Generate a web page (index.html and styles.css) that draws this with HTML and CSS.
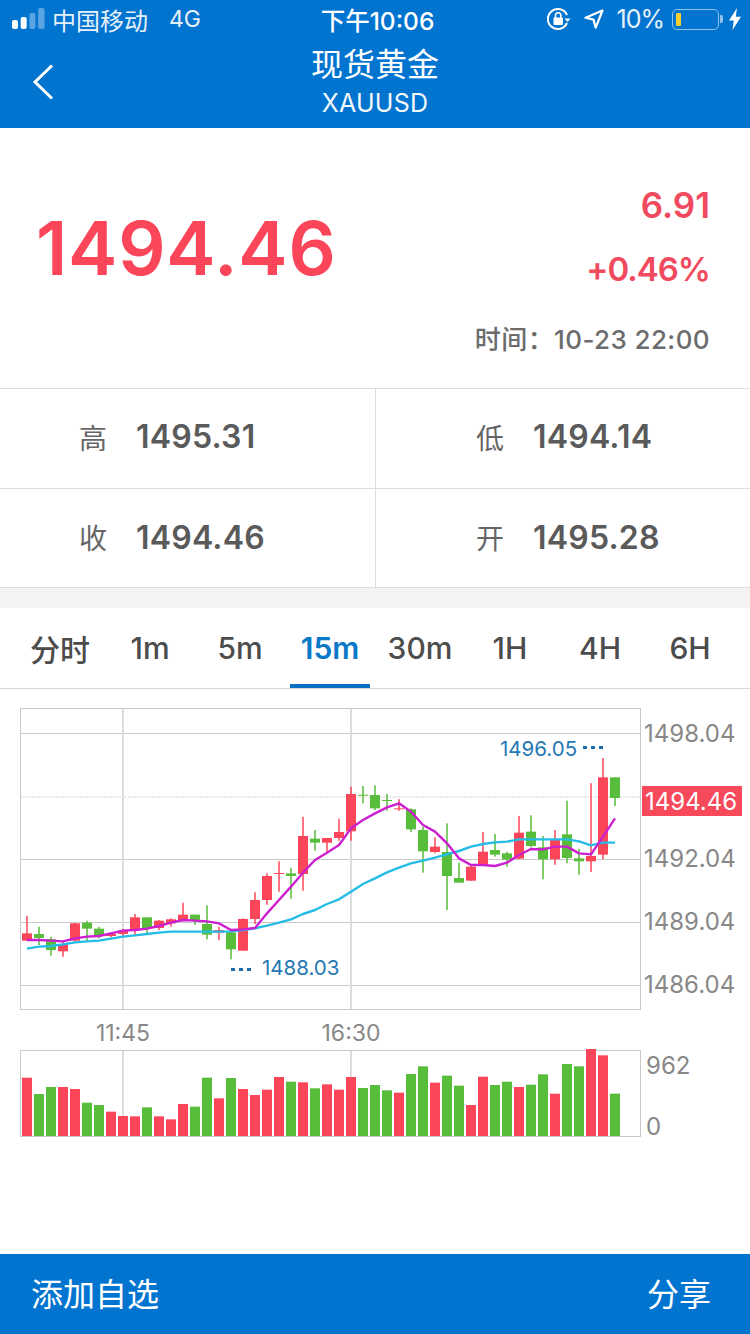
FILE: index.html
```html
<!DOCTYPE html>
<html lang="zh-CN">
<head>
    <meta charset="UTF-8">
    <meta name="viewport" content="width=device-width, initial-scale=1.0">
    <title>现货黄金</title>
    <link rel="stylesheet" href="styles.css">
</head>
<body>
    <div class="page">
        <header class="topbar">
            <div class="status">
                <div class="status-left">
                    <svg class="signal" width="34" height="22" viewBox="0 0 34 22">
                        <rect x="0" y="12" width="6" height="9" rx="2" fill="#fff"/>
                        <rect x="8.700" y="9" width="6" height="12" rx="2" fill="#fff"/>
                        <rect x="17.400" y="5" width="6" height="16" rx="2" fill="#fff" opacity=".35"/>
                        <rect x="26.100" y="0" width="6.500" height="21" rx="2" fill="#fff" opacity=".35"/>
                    </svg>
                    <span class="carrier">中国移动</span>
                    <span class="net">4G</span>
                </div>
                <div class="clock">下午10:06</div>
                <div class="status-right">
                    <svg width="24" height="24" viewBox="0 0 24 24" fill="none">
                        <path d="M20 8A10 10 0 1 0 20 16" stroke="#fff" stroke-width="2"/>
                        <path d="M17.500 11.500h6l-3 3.500z" fill="#fff"/>
                        <rect x="6.500" y="10.500" width="9.500" height="7.500" rx="1" fill="#fff"/>
                        <path d="M8.500 11V8.500a2.700 2.700 0 0 1 5.400 0V11" stroke="#fff" stroke-width="1.600"/>
                    </svg>
                    <svg class="locate" width="20" height="20" viewBox="0 0 20 20" fill="none">
                        <path d="M18.500 1.500L1.500 8.800l8 1.800 2.200 8z" stroke="#fff" stroke-width="2.200" stroke-linejoin="round"/>
                    </svg>
                    <span class="pct">10%</span>
                    <span class="battery"><span class="battery-fill"></span></span>
                    <svg class="bolt" width="12" height="22" viewBox="0 0 12 22">
                        <path d="M8 0L0 12.500h4.800L3.500 22 12 8.800H6.800z" fill="#fff"/>
                    </svg>
                </div>
            </div>
            <div class="title-block">
                <svg class="back" width="24" height="38" viewBox="0 0 24 38" fill="none">
                    <path d="M20 2.500L3 19l17 16.500" stroke="#fff" stroke-width="3"/>
                </svg>
                <h1 class="title">现货黄金</h1>
                <div class="subtitle">XAUUSD</div>
            </div>
        </header>

        <section class="quote">
            <div class="last-price">1494.46</div>
            <div class="quote-side">
                <div class="change change-abs">6.91</div>
                <div class="change change-pct">+0.46%</div>
                <div class="quote-time">时间：10-23 22:00</div>
            </div>
        </section>

        <section class="stats">
            <div class="stat"><span class="stat-label">高</span><span class="stat-value">1495.31</span></div>
            <div class="stat"><span class="stat-label">低</span><span class="stat-value">1494.14</span></div>
            <div class="stat"><span class="stat-label">收</span><span class="stat-value">1494.46</span></div>
            <div class="stat"><span class="stat-label">开</span><span class="stat-value">1495.28</span></div>
        </section>

        <div class="band"></div>

        <nav class="tabs">
            <span class="tab">分时</span>
            <span class="tab">1m</span>
            <span class="tab">5m</span>
            <span class="tab active">15m</span>
            <span class="tab">30m</span>
            <span class="tab">1H</span>
            <span class="tab">4H</span>
            <span class="tab">6H</span>
        </nav>

        <!-- viewBox starts at 689 so that the numbers are page y values -->
        <svg class="chart" width="750" height="455" viewBox="0 689 750 455">
            <g class="grid">
                <line x1="20" x2="640" y1="733.500" y2="733.500"/>
                <line x1="20" x2="640" y1="859.500" y2="859.500"/>
                <line x1="20" x2="640" y1="922.500" y2="922.500"/>
                <line x1="20" x2="640" y1="985.500" y2="985.500"/>
                <line class="grid-dot" x1="20" x2="640" y1="797" y2="797"/>
                <line class="grid-v" x1="123" x2="123" y1="709" y2="1010"/>
                <line class="grid-v" x1="351" x2="351" y1="709" y2="1010"/>
                <line class="grid-v" x1="123" x2="123" y1="1050" y2="1136"/>
                <line class="grid-v" x1="351" x2="351" y1="1050" y2="1136"/>
                <rect x="20.500" y="708.500" width="620" height="301"/>
                <rect x="20.500" y="1050.500" width="620" height="86"/>
            </g>
            <g id="candles"></g>
            <polyline id="ma-slow" class="ma-slow"></polyline>
            <polyline id="ma-fast" class="ma-fast"></polyline>
            <g id="volumes"></g>

            <text class="axis" x="644" y="742">1498.04</text>
            <text class="axis" x="644" y="867">1492.04</text>
            <text class="axis" x="644" y="930">1489.04</text>
            <text class="axis" x="644" y="993">1486.04</text>
            <rect class="now-bg" x="642" y="786" width="100" height="30"/>
            <text class="now" x="645" y="810">1494.46</text>

            <text class="mark" x="500" y="756">1496.05</text>
            <line class="mark-dots" x1="583" x2="604" y1="747.500" y2="747.500"/>
            <text class="mark" x="262" y="975">1488.03</text>
            <line class="mark-dots" x1="231" x2="252" y1="969.500" y2="969.500"/>

            <text class="axis time" x="123" y="1041">11:45</text>
            <text class="axis time" x="351" y="1041">16:30</text>
            <text class="axis" x="646" y="1074">962</text>
            <text class="axis" x="646" y="1135">0</text>
        </svg>

        <footer class="bottombar">
            <span>添加自选</span>
            <span>分享</span>
        </footer>
    </div>
    <script src="chart.js"></script>
</body>
</html>
```
FILE: styles.css
```css
*{
    margin: 0;
    padding: 0;
    box-sizing: border-box;
}
body{
    width: 750px;
    height: 1334px;
    overflow: hidden;
    background: #fff;
    font-family: Inter, "Noto Sans CJK SC", sans-serif;
}
.page{
    height: 1334px;
    display: flex;
    flex-direction: column;
}

/* top */
.topbar{
    height: 128px;
    background: #0174d0;
    color: #fff;
}
.status{
    height: 40px;
    display: grid;
    grid-template-columns: 1fr auto 1fr;
    align-items: center;
    padding: 0 9px 2px 12px;
}
.status-left,
.status-right{
    display: flex;
    align-items: center;
}
.status-right{
    justify-content: flex-end;
}
.signal{
    margin-right: 6px;
}
.carrier{
    font-size: 24px;
    opacity: .9;
}
.net{
    font-size: 23px;
    margin-left: 21px;
    opacity: .9;
}
.clock{
    font-size: 24.500px;
    font-weight: 500;
    margin-left: 2px;
}
.locate{
    margin-left: 13px;
}
.pct{
    font-size: 25px;
    margin-left: 13px;
    letter-spacing: -1px;
    opacity: .9;
}
.battery{
    width: 47px;
    height: 21px;
    margin-left: 8px;
    padding: 3px;
    border: 1.500px solid #8fc3ee;
    border-radius: 5px;
    margin-right: 10px;
    position: relative;
}
.battery::after{
    content: '';
    position: absolute;
    right: -5px;
    top: 5px;
    width: 3px;
    height: 8px;
    border-radius: 0 2px 2px 0;
    background: #8fc3ee;
}
.battery-fill{
    display: block;
    width: 5px;
    height: 100%;
    border-radius: 1px;
    background: #f2cf2c;
}
.title-block{
    height: 88px;
    text-align: center;
    position: relative;
}
.back{
    position: absolute;
    left: 32px;
    top: 23px;
}
.title{
    font-size: 32px;
    font-weight: 400;
    line-height: 44px;
    padding-top: 3px;
}
.subtitle{
    font-size: 25px;
    letter-spacing: .2px;
    line-height: 30px;
    margin-top: 1px;
    opacity: .95;
}

/* quote */
.quote{
    height: 261px;
    padding: 0 40px 0 36px;
    display: flex;
    justify-content: space-between;
    align-items: center;
    border-bottom: 1px solid #ddd;
}
.last-price{
    font-size: 74px;
    font-weight: 600;
    letter-spacing: .8px;
    padding-bottom: 20px;
    color: #fb4558;
}
.quote-side{
    text-align: right;
    padding-top: 14px;
}
.change{
    font-weight: 600;
    line-height: 64px;
    color: #f04a5e;
}
.change-abs{
    font-size: 35px;
}
.change-pct{
    font-size: 33px;
    letter-spacing: -1px;
}
.quote-time{
    font-size: 26px;
    font-weight: 500;
    letter-spacing: .4px;
    line-height: 36px;
    margin-top: 21px;
    color: #6c6c6c;
}

/* high low open close */
.stats{
    display: grid;
    grid-template-columns: 376px 374px;
    border-bottom: 1px solid #ddd;
}
.stat{
    height: 100px;
    padding: 0 0 4px 79px;
    display: flex;
    align-items: center;
    border-bottom: 1px solid #ddd;
    color: #5a5a5a;
}
.stat:nth-child(odd){
    border-right: 1px solid #ddd;
}
.stat:nth-child(even){
    padding-left: 100px;
}
.stat:nth-child(n+3){
    height: 98px;
    padding-bottom: 2px;
    border-bottom: 0;
}
.stat-label{
    font-size: 28px;
    margin-right: 29px;
    color: #666;
}
.stat-value{
    font-size: 32px;
    font-weight: 600;
    letter-spacing: .2px;
}
.band{
    height: 20px;
    background: #f3f3f4;
}

/* period tabs */
.tabs{
    height: 81px;
    padding: 0 15px;
    display: flex;
    align-items: center;
    border-bottom: 1px solid #d8d8dc;
}
.tab{
    width: 90px;
    height: 100%;
    padding-bottom: 1px;
    display: flex;
    align-items: center;
    justify-content: center;
    font-size: 30px;
    font-weight: 500;
    color: #4c4c4c;
    position: relative;
}
.tab.active{
    color: #0a78c8;
    font-weight: 600;
}
.tab.active::after{
    content: '';
    position: absolute;
    left: 5px;
    right: 5px;
    bottom: 0;
    height: 4px;
    background: #0a6fc2;
}

/* chart */
.chart{
    display: block;
}
.grid line,
.grid rect{
    stroke: #c9c9c9;
    stroke-width: 1;
    fill: none;
}
.grid .grid-dot{
    stroke: #cdd8d4;
    stroke-dasharray: 2 1;
}
.grid .grid-v{
    stroke: #dcdcdc;
    stroke-width: 2;
}
.ma-slow,
.ma-fast{
    fill: none;
    stroke-width: 2.400;
    stroke-linejoin: round;
}
.ma-slow{
    stroke: #25bde6;
}
.ma-fast{
    stroke: #cc1fcf;
}
.up{
    fill: #fb4558;
    stroke: #fb4558;
}
.down{
    fill: #58bd3a;
    stroke: #58bd3a;
}
.axis{
    font-size: 24px;
    fill: #888;
}
.axis.time{
    font-size: 23px;
    text-anchor: middle;
}
.now-bg{
    fill: #f7495a;
}
.now{
    font-size: 24px;
    fill: #fff;
}
.mark{
    font-size: 20.500px;
    fill: #2478b4;
}
.mark-dots{
    stroke: #1d6ea6;
    stroke-width: 3;
    stroke-dasharray: 4 4;
}

/* bottom */
.bottombar{
    height: 80px;
    margin-top: auto;
    padding: 0 39px 5px 31px;
    display: flex;
    justify-content: space-between;
    align-items: center;
    background: #0174d0;
    color: #fff;
    font-size: 32px;
}
```
FILE: chart.js
```js
var NS = 'http://www.w3.org/2000/svg'

// y values below were read at 3x, zoomY() turns them into page y
function zoomY (v) { return 700 + v / 3 }

// up, wick top, wick bottom, body top, body bottom
var candles = [
    [1,648,722,700,722],[0,680,735,702,714],[0,710,767,718,750],[1,725,770,732,754],
    [1,668,725,670,722],[0,662,722,668,686],[0,680,715,686,706],[1,698,712,702,708],
    [1,688,712,692,702],[1,642,705,652,692],[0,652,705,652,684],[1,660,690,662,684],
    [1,655,680,658,670],[1,608,664,644,662],[0,644,675,644,660],[0,616,718,672,704],
    [1,680,720,690,698],[0,695,778,697,748],[1,655,752,657,752],[1,577,672,600,657],
    [1,520,614,528,600],[1,484,575,519,522],[0,503,596,520,528],[1,350,572,408,522],
    [0,390,452,416,428],[1,414,455,414,428],[1,356,422,396,414],[1,260,422,282,394],
    [0,258,310,284,286],[0,256,330,285,325],[0,282,332,300,302],[1,298,332,325,328],
    [0,325,396,328,388],[0,380,518,390,454],[1,412,460,440,456],[0,370,630,456,528],
    [0,488,548,534,548],[1,498,542,500,542],[1,396,495,455,494],[0,402,470,450,464],
    [0,455,500,460,478],[1,348,478,398,476],[0,346,442,395,438],[0,408,538,442,478],
    [1,390,494,420,478],[0,302,490,403,474],[0,446,524,475,484],[1,250,516,468,484],
    [1,174,478,232,464],[0,232,318,232,294]
]

// colour follows the volume bar, not always the candle
var volumes = [
    [1,188],[0,237],[0,216],[1,216],[1,222],[0,263],[0,270],[1,290],[1,303],[1,304],
    [0,277],[1,304],[1,313],[1,267],[0,275],[0,188],[1,250],[0,189],[1,222],[1,240],
    [1,224],[1,186],[0,200],[1,202],[0,220],[1,208],[1,224],[1,186],[0,219],[0,210],
    [0,226],[1,233],[0,177],[0,154],[1,203],[0,182],[0,212],[1,270],[1,185],[0,210],
    [0,200],[1,216],[0,209],[0,178],[1,236],[0,147],[0,154],[1,102],[1,121],[0,236]
]

var maFast = [720,720,722,724,715,710,708,700,692,690,686,678,668,660,662,664,670,690,688,684,
    640,600,560,518,480,458,435,385,360,340,322,310,335,375,395,430,475,495,495,498,
    488,465,447,448,440,440,460,463,410,355]

var maSlow = [746,740,738,733,727,724,722,716,710,706,702,698,695,695,695,695,695,694,690,685,
    677,668,658,642,630,612,598,575,552,535,517,503,490,482,473,463,453,440,432,427,
    425,418,418,418,418,418,424,436,428,428]

function barX (i) { return 27 + 12 * i }

function add (parent, tag, attrs) {
    var el = document.createElementNS(NS, tag)
    for (var k in attrs) el.setAttribute(k, attrs[k])
    parent.appendChild(el)
}

var candleBox = document.getElementById('candles')
candles.forEach(function (c, i) {
    var cls = c[0] ? 'up' : 'down'
    var x = barX(i)
    add(candleBox, 'line', {class: cls, x1: x, x2: x, y1: zoomY(c[1]), y2: zoomY(c[2]), 'stroke-width': 1.5})
    add(candleBox, 'rect', {class: cls, x: x - 5, y: zoomY(c[3]), width: 10,
        height: Math.max((c[4] - c[3]) / 3, 1), 'stroke-width': 0})
})

var volumeBox = document.getElementById('volumes')
volumes.forEach(function (v, i) {
    var top = 1015 + v[1] / 3
    add(volumeBox, 'rect', {class: v[0] ? 'up' : 'down', x: barX(i) - 5, y: top, width: 10,
        height: 1136 - top, 'stroke-width': 0})
})

function points (list) {
    return list.map(function (v, i) { return barX(i) + ',' + zoomY(v) }).join(' ')
}
document.getElementById('ma-fast').setAttribute('points', points(maFast))
document.getElementById('ma-slow').setAttribute('points', points(maSlow))
```
